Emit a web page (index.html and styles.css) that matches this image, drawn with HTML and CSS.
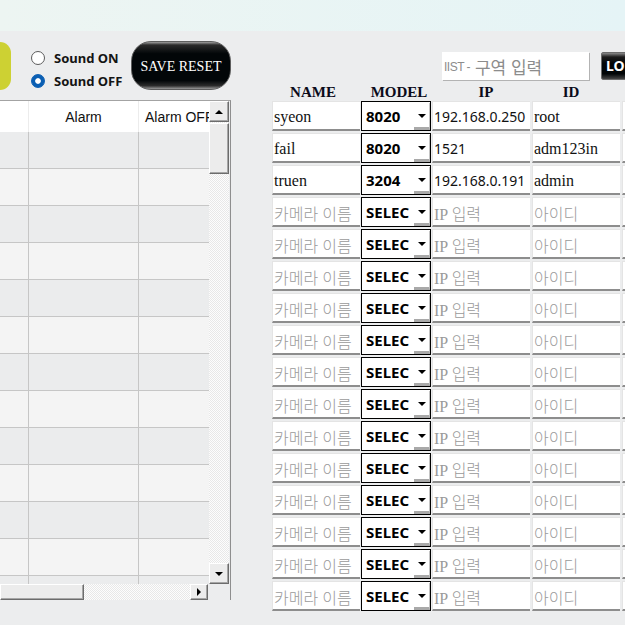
FILE: index.html
```html
<!DOCTYPE html>
<html lang="ko">
<head>
<meta charset="utf-8">
<title>Camera setup</title>
<link rel="stylesheet" href="styles.css">
</head>
<body>
<div class="topband"></div>
<div class="main">
  <div class="left">
    <div class="controls">
      <div class="pill"></div>
      <div class="sound">
        <label class="radio"><span class="circle"></span>Sound ON</label>
        <label class="radio"><span class="circle on"></span>Sound OFF</label>
      </div>
      <div class="save">SAVE RESET</div>
    </div>
    <div class="panel">
      <div class="panel-top">
        <div class="grid">
          <div class="grow head"><div class="c1"></div><div class="c2">Alarm</div><div class="c3">Alarm OFF</div></div>
          <div class="grow"><div class="c1"></div><div class="c2"></div><div class="c3"></div></div>
          <div class="grow"><div class="c1"></div><div class="c2"></div><div class="c3"></div></div>
          <div class="grow"><div class="c1"></div><div class="c2"></div><div class="c3"></div></div>
          <div class="grow"><div class="c1"></div><div class="c2"></div><div class="c3"></div></div>
          <div class="grow"><div class="c1"></div><div class="c2"></div><div class="c3"></div></div>
          <div class="grow"><div class="c1"></div><div class="c2"></div><div class="c3"></div></div>
          <div class="grow"><div class="c1"></div><div class="c2"></div><div class="c3"></div></div>
          <div class="grow"><div class="c1"></div><div class="c2"></div><div class="c3"></div></div>
          <div class="grow"><div class="c1"></div><div class="c2"></div><div class="c3"></div></div>
          <div class="grow"><div class="c1"></div><div class="c2"></div><div class="c3"></div></div>
          <div class="grow"><div class="c1"></div><div class="c2"></div><div class="c3"></div></div>
          <div class="grow"><div class="c1"></div><div class="c2"></div><div class="c3"></div></div>
          <div class="grow"><div class="c1"></div><div class="c2"></div><div class="c3"></div></div>
        </div>
        <div class="vscroll">
          <div class="sbtn vbtn"><i class="tri-up"></i></div>
          <div class="vthumb"></div>
          <div class="vtrack"></div>
          <div class="sbtn vbtn"><i class="tri-down"></i></div>
        </div>
      </div>
      <div class="hscroll">
        <div class="hthumb"></div>
        <div class="htrack"></div>
        <div class="sbtn hbtn"><i class="tri-right"></i></div>
        <div class="corner"></div>
      </div>
    </div>
  </div>

  <div class="right">
    <div class="search">
      <div class="zone"><span class="iist">IIST -</span>&nbsp;구역 입력</div>
      <div class="lo">LO</div>
    </div>
    <div class="heads">
      <span class="h-name">NAME</span>
      <span class="h-model">MODEL</span>
      <span class="h-ip">IP</span>
      <span class="h-id">ID</span>
    </div>
    <div class="rows">
      <div class="row">
        <div class="cell name serif">syeon</div>
        <div class="model"><span>8020</span><span class="arr"><i class="tri-down"></i></span></div>
        <div class="cell ip sans">192.168.0.250</div>
        <div class="cell id serif">root</div>
        <div class="cell extra"><i class="mark"></i></div>
      </div>
      <div class="row">
        <div class="cell name serif">fail</div>
        <div class="model"><span>8020</span><span class="arr"><i class="tri-down"></i></span></div>
        <div class="cell ip sans">1521</div>
        <div class="cell id serif">adm123in</div>
        <div class="cell extra"><i class="mark"></i></div>
      </div>
      <div class="row">
        <div class="cell name serif">truen</div>
        <div class="model"><span>3204</span><span class="arr"><i class="tri-down"></i></span></div>
        <div class="cell ip sans">192.168.0.191</div>
        <div class="cell id serif">admin</div>
        <div class="cell extra"><i class="mark"></i></div>
      </div>
      <div class="row"><div class="cell name ph">카메라 이름</div><div class="model"><span>SELEC</span><span class="arr"><i class="tri-down"></i></span></div><div class="cell ip ph">IP 입력</div><div class="cell id ph">아이디</div><div class="cell extra"></div></div>
      <div class="row"><div class="cell name ph">카메라 이름</div><div class="model"><span>SELEC</span><span class="arr"><i class="tri-down"></i></span></div><div class="cell ip ph">IP 입력</div><div class="cell id ph">아이디</div><div class="cell extra"></div></div>
      <div class="row"><div class="cell name ph">카메라 이름</div><div class="model"><span>SELEC</span><span class="arr"><i class="tri-down"></i></span></div><div class="cell ip ph">IP 입력</div><div class="cell id ph">아이디</div><div class="cell extra"></div></div>
      <div class="row"><div class="cell name ph">카메라 이름</div><div class="model"><span>SELEC</span><span class="arr"><i class="tri-down"></i></span></div><div class="cell ip ph">IP 입력</div><div class="cell id ph">아이디</div><div class="cell extra"></div></div>
      <div class="row"><div class="cell name ph">카메라 이름</div><div class="model"><span>SELEC</span><span class="arr"><i class="tri-down"></i></span></div><div class="cell ip ph">IP 입력</div><div class="cell id ph">아이디</div><div class="cell extra"></div></div>
      <div class="row"><div class="cell name ph">카메라 이름</div><div class="model"><span>SELEC</span><span class="arr"><i class="tri-down"></i></span></div><div class="cell ip ph">IP 입력</div><div class="cell id ph">아이디</div><div class="cell extra"></div></div>
      <div class="row"><div class="cell name ph">카메라 이름</div><div class="model"><span>SELEC</span><span class="arr"><i class="tri-down"></i></span></div><div class="cell ip ph">IP 입력</div><div class="cell id ph">아이디</div><div class="cell extra"></div></div>
      <div class="row"><div class="cell name ph">카메라 이름</div><div class="model"><span>SELEC</span><span class="arr"><i class="tri-down"></i></span></div><div class="cell ip ph">IP 입력</div><div class="cell id ph">아이디</div><div class="cell extra"></div></div>
      <div class="row"><div class="cell name ph">카메라 이름</div><div class="model"><span>SELEC</span><span class="arr"><i class="tri-down"></i></span></div><div class="cell ip ph">IP 입력</div><div class="cell id ph">아이디</div><div class="cell extra"></div></div>
      <div class="row"><div class="cell name ph">카메라 이름</div><div class="model"><span>SELEC</span><span class="arr"><i class="tri-down"></i></span></div><div class="cell ip ph">IP 입력</div><div class="cell id ph">아이디</div><div class="cell extra"></div></div>
      <div class="row"><div class="cell name ph">카메라 이름</div><div class="model"><span>SELEC</span><span class="arr"><i class="tri-down"></i></span></div><div class="cell ip ph">IP 입력</div><div class="cell id ph">아이디</div><div class="cell extra"></div></div>
      <div class="row"><div class="cell name ph">카메라 이름</div><div class="model"><span>SELEC</span><span class="arr"><i class="tri-down"></i></span></div><div class="cell ip ph">IP 입력</div><div class="cell id ph">아이디</div><div class="cell extra"></div></div>
      <div class="row"><div class="cell name ph">카메라 이름</div><div class="model"><span>SELEC</span><span class="arr"><i class="tri-down"></i></span></div><div class="cell ip ph">IP 입력</div><div class="cell id ph">아이디</div><div class="cell extra"></div></div>
    </div>
  </div>
</div>
</body>
</html>
```

FILE: styles.css
```css
html, body {
  margin: 0;
  overflow: hidden;
}
body {
  background: #ecedee;
  font-family: "Liberation Sans", Arial, sans-serif;
  width: 625px;
  height: 625px;
}
.topband {
  height: 31px;
  background: linear-gradient(90deg, #edf5f2, #e5f4f6);
}
.main {
  display: flex;
  align-items: flex-start;
}

/* ---------- left side ---------- */
.left {
  width: 231px;
  flex: none;
}
.controls {
  height: 69px;
  box-sizing: border-box;
  padding-top: 10px;
  display: flex;
  align-items: flex-start;
}
.pill {
  width: 11px;
  height: 48px;
  margin-top: 1px;
  flex: none;
  background: #cdd133;
  border-radius: 0 11px 11px 0;
}
.sound {
  width: 100px;
  flex: none;
  margin-left: 20px;
  margin-top: 10px;
  display: flex;
  flex-direction: column;
  gap: 9px;
}
.radio {
  display: flex;
  align-items: center;
  gap: 9px;
  height: 14px;
  font: bold 13px/14px "Noto Sans", sans-serif;
  color: #141414;
  white-space: nowrap;
}
.circle {
  width: 14px;
  height: 14px;
  flex: none;
  box-sizing: border-box;
  border: 1px solid #5c5c5c;
  border-radius: 50%;
  background: #fff;
}
.circle.on {
  border-color: #0b5fb3;
  background: radial-gradient(circle, #fff 0 2.4px, #0b5fb3 3.2px);
}
.save {
  width: 100px;
  height: 49px;
  flex: none;
  box-sizing: border-box;
  border: 1px solid #5e5e5e;
  border-radius: 20px;
  background: linear-gradient(#a0a0a0 0, #2a2a2a 3px, #020608 25%, #020608 82%, #2c2c2c 93%, #9a9a9a 100%);
  color: #fff;
  font: 14px "Liberation Serif", serif;
  display: flex;
  align-items: center;
  justify-content: center;
  padding-top: 3px;
  white-space: nowrap;
}

.panel {
  width: 230px;
  border-top: 1px solid #a3a3a3;
  border-right: 1px solid #8e8e8e;
}
.panel-top {
  display: flex;
  height: 483px;
}
.grid {
  width: 209px;
  flex: none;
  overflow: hidden;
}
.grow {
  display: flex;
  width: 219px;
  height: 37px;
  box-sizing: border-box;
  border-bottom: 1px solid #c6c6c6;
  background: #ebeced;
}
.grow:nth-child(odd) {
  background: #f4f4f4;
}
.grow.head {
  height: 31px;
  border-bottom: none;
  background: #fff;
}
.c1, .c2, .c3 {
  box-sizing: border-box;
  text-align: center;
  font: 14px/33px "Liberation Sans", Arial, sans-serif;
  color: #111;
  white-space: nowrap;
}
.c1 { flex: 0 0 29px; border-right: 1px solid #c6c6c6; }
.c2 { flex: 0 0 110px; border-right: 1px solid #c6c6c6; }
.c3 { flex: 0 0 80px; padding-left: 6px; text-align: left; }
.head .c1, .head .c2 { border-right-color: #ececec; }

.vscroll {
  width: 20px;
  flex: none;
  display: flex;
  flex-direction: column;
  background: repeating-conic-gradient(#fdfdfd 0 25%, #e8e8e8 0 50%) 0 0 / 2px 2px;
}
.sbtn, .vthumb, .hthumb {
  box-sizing: border-box;
  background: #ececec;
  border: 1px solid;
  border-color: #fff #6c6c6c #6c6c6c #fff;
  box-shadow: inset -1px -1px 0 #a6a6a6;
}
.sbtn {
  display: flex;
  align-items: center;
  justify-content: center;
  flex: none;
}
.vbtn { height: 21px; }
.vthumb { height: 51px; margin-top: 1px; flex: none; }
.vtrack { flex: 1; }

.hscroll {
  display: flex;
  height: 16px;
}
.hthumb { width: 84px; flex: none; }
.htrack {
  width: 106px;
  flex: none;
  background: repeating-conic-gradient(#fdfdfd 0 25%, #e8e8e8 0 50%) 0 0 / 2px 2px;
}
.hbtn { width: 18px; height: 16px; }
.corner { flex: 1; background: #ecedee; }

.tri-up, .tri-down, .tri-right {
  display: block;
  width: 0;
  height: 0;
}
.tri-up {
  border-left: 4px solid transparent;
  border-right: 4px solid transparent;
  border-bottom: 4px solid #000;
}
.tri-down {
  border-left: 4px solid transparent;
  border-right: 4px solid transparent;
  border-top: 4px solid #000;
}
.tri-right {
  border-top: 4px solid transparent;
  border-bottom: 4px solid transparent;
  border-left: 4px solid #000;
}

/* ---------- right side ---------- */
.right {
  margin-left: 41px;
  width: 420px;
  flex: none;
}
.search {
  display: flex;
  gap: 12px;
  padding-left: 170px;
  margin-top: 21px;
  height: 28px;
}
.zone {
  width: 147px;
  height: 28px;
  flex: none;
  box-sizing: border-box;
  padding-left: 2px;
  background: #fff;
  box-shadow: 1px 1px 0 #b3b3b3;
  display: flex;
  align-items: center;
  color: #8c8c8c;
  font: 17px "Noto Sans CJK KR", sans-serif;
  white-space: nowrap;
}
.iist {
  font: 12px "Liberation Sans", Arial, sans-serif;
  letter-spacing: -0.5px;
  padding-top: 2px;
}
.lo {
  width: 50px;
  height: 28px;
  flex: none;
  box-sizing: border-box;
  border: 1px solid #6b6b6b;
  border-radius: 2px;
  background: linear-gradient(#8a8a8a 0, #1c1c1c 4px, #020608 40%, #020608 80%, #444 100%);
  color: #fff;
  font: bold 14px/26px "Noto Sans", sans-serif;
  padding-left: 4px;
}
.heads {
  display: flex;
  height: 21px;
  align-items: flex-end;
  font: bold 15px/17px "Liberation Serif", serif;
  color: #0b0b1a;
}
.heads span { text-align: center; flex: none; }
.h-name { width: 82px; }
.h-model { width: 90px; }
.h-ip { width: 84px; }
.h-id { width: 86px; }

.row {
  display: flex;
  height: 30px;
  margin-bottom: 2px;
}
.cell {
  flex: none;
  box-sizing: border-box;
  background: #fff;
  border-top: 1px solid #e4e4e4;
  border-left: 1px solid #e4e4e4;
  border-bottom: 2px solid #8d8d8d;
  padding-left: 1px;
  padding-top: 2px;
  display: flex;
  align-items: center;
  white-space: nowrap;
  overflow: hidden;
}
.name { width: 88px; margin-right: 1px; }
.ip { width: 98px; margin-right: 2px; }
.id { width: 88px; margin-right: 2px; }
.extra { width: 60px; padding-top: 0; }
.serif {
  font: 16px "Liberation Serif", serif;
  color: #111;
}
.sans {
  font: 14px "Noto Sans", sans-serif;
  color: #111;
}
.ph {
  font: 300 16px "Liberation Serif", "Noto Sans CJK KR", sans-serif;
  color: #9a9a9a;
}
.model {
  width: 70px;
  height: 30px;
  flex: none;
  margin-right: 1px;
  box-sizing: border-box;
  border: 1px solid #000;
  background: #fff;
  padding-left: 4px;
  padding-top: 1px;
  display: flex;
  align-items: center;
  justify-content: space-between;
  font: bold 15px/1 "Noto Sans", sans-serif;
  color: #000;
}
.arr {
  width: 16px;
  align-self: stretch;
  box-sizing: border-box;
  border-bottom: 3px solid #a9a9a9;
  border-right: 1px solid #c4c4c4;
  display: flex;
  align-items: center;
  justify-content: center;
  padding-top: 1px;
}
.mark {
  display: block;
  width: 2px;
  height: 6px;
  background: #f1d21c;
  margin-left: 1px;
}
```
